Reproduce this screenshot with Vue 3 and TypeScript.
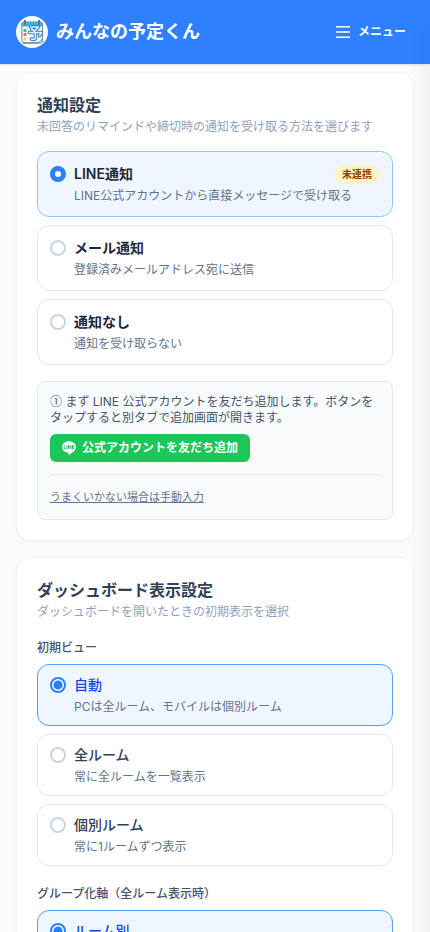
<script setup lang="ts">
import { ref } from 'vue'

interface Option {
  value: string
  title: string
  note: string
  badge?: string
}

const notifyOptions: Option[] = [
  { value: 'line', title: 'LINE通知', note: 'LINE公式アカウントから直接メッセージで受け取る', badge: '未連携' },
  { value: 'mail', title: 'メール通知', note: '登録済みメールアドレス宛に送信' },
  { value: 'none', title: '通知なし', note: '通知を受け取らない' },
]
const viewOptions: Option[] = [
  { value: 'auto', title: '自動', note: 'PCは全ルーム、モバイルは個別ルーム' },
  { value: 'all', title: '全ルーム', note: '常に全ルームを一覧表示' },
  { value: 'single', title: '個別ルーム', note: '常に1ルームずつ表示' },
]
const groupOptions: Option[] = [{ value: 'room', title: 'ルーム別', note: '' }]

const notify = ref('line')
const view = ref('auto')
const group = ref('room')
</script>

<template>
  <div class="page">
    <header class="bar">
      <a class="brand" href="#">
        <svg class="logo" viewBox="0 0 32 32" aria-hidden="true">
          <circle cx="16" cy="16" r="16" fill="#fff" />
          <rect x="5.8" y="6" width="20.8" height="21" rx="2" fill="#f1f8fd" stroke="#6d8798" />
          <path d="M6 10.500V7.500q0-1.500 1.500-1.500h17.500q1.500 0 1.500 1.500v3z" fill="#3fb0e4" />
          <path d="M9 4.800v3.400M23 4.800v3.400" stroke="#5b7689" stroke-width="2" stroke-linecap="round" />
          <rect x="7.500" y="13" width="3" height="3" fill="#46c07f" />
          <rect x="7.500" y="17" width="3" height="3" fill="#f4667a" />
          <path d="m9 21 1.700 1.700L9 24.400l-1.700-1.700z" fill="#fbcf58" />
          <g fill="none" stroke-linecap="round" stroke-linejoin="round">
            <path d="M14.500 11h8l-4 4-3-2m-2 3.500h12l-2 3m-4-3v5.500q0 2-4 1" stroke="#2f7fc2" stroke-width="3.600" />
            <path d="M14.500 11h8l-4 4-3-2m-2 3.500h12l-2 3m-4-3v5.500q0 2-4 1" stroke="#e0f3ff" stroke-width="1.600" />
          </g>
          <path d="M7 27h15.500l4-4" fill="none" stroke="#58758a" />
        </svg>
        <span class="name">みんなの予定くん</span>
      </a>
      <button class="menu" type="button">
        <svg class="menu-icon" viewBox="0 0 14 14" fill="none" stroke="currentColor" stroke-width="1.500" aria-hidden="true">
          <path d="M0 1.750h14M0 7h14M0 12.250h14" />
        </svg>
        メニュー
      </button>
    </header>

    <main class="content">
      <section class="card">
        <h2>通知設定</h2>
        <p class="lead">未回答のリマインドや締切時の通知を受け取る方法を選びます</p>
        <div class="options" role="radiogroup" aria-label="通知設定">
          <label v-for="o in notifyOptions" :key="o.value" class="option notify" :class="{ on: notify === o.value }">
            <input v-model="notify" type="radio" name="notify" :value="o.value" />
            <span class="body">
              <span class="head">
                <span class="title">{{ o.title }}</span>
                <span v-if="o.badge" class="badge">{{ o.badge }}</span>
              </span>
              <span class="note">{{ o.note }}</span>
            </span>
          </label>
        </div>
        <div class="guide">
          <p><span class="step">①</span> まず LINE 公式アカウントを友だち追加します。ボタンをタップすると別タブで追加画面が開きます。</p>
          <a class="add" href="#">
            <svg viewBox="0 0 24 24" aria-hidden="true">
              <path d="M24 10.300C24 4.900 18.600.600 12 .600S0 4.900 0 10.300c0 4.800 4.300 8.900 10 9.600.400.100.900.300 1.100.600.100.300.100.800 0 1.100l-.200 1.100c0 .300-.200 1.300 1.100.700s7.100-4.200 9.700-7.200C23.500 14.300 24 12.300 24 10.300z" fill="#fff" />
              <path d="M3.800 7v6.200h2.800M8.600 7v7M11.300 14V7.300l4 6V7M21 7.800h-3v5.400h3M18 10.500h2.700" fill="none" stroke="#1cc658" stroke-width="1.700" />
            </svg>
            公式アカウントを友だち追加
          </a>
          <div class="manual">
            <button type="button">うまくいかない場合は手動入力</button>
          </div>
        </div>
      </section>

      <section class="card">
        <h2>ダッシュボード表示設定</h2>
        <p class="lead">ダッシュボードを開いたときの初期表示を選択</p>
        <fieldset>
          <legend>初期ビュー</legend>
          <div class="options">
            <label v-for="o in viewOptions" :key="o.value" class="option view" :class="{ on: view === o.value }">
              <input v-model="view" type="radio" name="view" :value="o.value" />
              <span class="body">
                <span class="title">{{ o.title }}</span>
                <span class="note">{{ o.note }}</span>
              </span>
            </label>
          </div>
        </fieldset>
        <fieldset>
          <legend>グループ化軸（全ルーム表示時）</legend>
          <div class="options">
            <label v-for="o in groupOptions" :key="o.value" class="option view" :class="{ on: group === o.value }">
              <input v-model="group" type="radio" name="group" :value="o.value" />
              <span class="body">
                <span class="title">{{ o.title }}</span>
                <span class="note">{{ o.note }}</span>
              </span>
            </label>
          </div>
        </fieldset>
      </section>
    </main>
    <div class="drawer" aria-hidden="true"></div>
  </div>
</template>

<style>
html {
  scrollbar-width: none;
}
body {
  background: #f8fafc;
}
</style>

<style scoped>
* {
  box-sizing: border-box;
}
.page {
  min-height: 100vh;
  font-family: Inter, 'Noto Sans CJK JP', sans-serif;
  color: #314158;
}
.bar {
  position: sticky;
  top: 0;
  z-index: 1;
  display: flex;
  align-items: center;
  justify-content: space-between;
  height: 64px;
  padding: 0 16px;
  background: #2f80ff;
  color: #fff;
  box-shadow: 0 1px 2px rgb(0 0 0 / 12%);
}
.brand {
  display: flex;
  align-items: center;
  gap: 8px;
  color: inherit;
  text-decoration: none;
}
.logo {
  width: 32px;
  height: 32px;
}
.name {
  font-size: 18px;
  font-weight: 700;
  line-height: 28px;
}
button {
  border: 0;
  background: none;
  color: inherit;
  font: inherit;
  cursor: pointer;
}
.menu {
  display: flex;
  align-items: center;
  gap: 8px;
  padding: 8px;
  font-size: 12px;
  font-weight: 600;
  line-height: 16px;
}
.menu-icon {
  width: 14px;
  height: 14px;
}
.content {
  display: flex;
  flex-direction: column;
  gap: 16px;
  padding: 8px 16px 16px;
}
.card {
  padding: 20px;
  border: 1px solid #f1f5f9;
  border-radius: 16px;
  background: #fff;
  box-shadow: 0 1px 2px rgb(0 0 0 / 5%);
}
h2 {
  margin: 0;
  font-size: 16px;
  font-weight: 600;
  line-height: 24px;
}
.lead {
  margin: 2px 0 0;
  color: #90a1b9;
  font-size: 12px;
  line-height: 16px;
}
.options {
  display: flex;
  flex-direction: column;
  gap: 8px;
}
.lead + .options {
  margin-top: 16px;
}
.option {
  display: flex;
  gap: 8px;
  padding: 12px;
  border: 1px solid #e2e8f0;
  border-radius: 12px;
  cursor: pointer;
}
.option.view {
  padding: 10px 12px;
}
.option.on {
  border-color: #8ec5ff;
  background: #eff6ff;
}
.option.view.on {
  border-color: #51a2ff;
}
input {
  appearance: none;
  flex: none;
  width: 16px;
  height: 16px;
  margin: 2px 0 0;
  border: 2px solid #cad5e2;
  border-radius: 50%;
  background: #fff;
}
.notify input:checked {
  border: 5px solid #2b7fff;
}
.view input:checked {
  border-color: #2b7fff;
  background: radial-gradient(circle, #2b7fff 4px, #fff 5px);
}
.body {
  display: flex;
  flex: 1;
  flex-direction: column;
  gap: 4px;
  min-width: 0;
}
.head {
  display: flex;
  align-items: center;
  justify-content: space-between;
  height: 20px;
}
.title {
  color: #1d293d;
  font-size: 14px;
  font-weight: 600;
  line-height: 20px;
}
.view .title {
  color: #314158;
  font-weight: 500;
}
.view.on .title {
  color: #1447e6;
}
.note {
  min-height: 16px;
  color: #62748e;
  font-size: 12px;
  line-height: 16px;
}
.badge {
  padding: 2px 8px;
  border-radius: 10px;
  background: #fef3c6;
  color: #973c00;
  font-size: 10px;
  font-weight: 600;
  line-height: 15px;
}
.guide {
  display: flex;
  flex-direction: column;
  align-items: flex-start;
  margin-top: 16px;
  padding: 12px;
  border: 1px solid #e2e8f0;
  border-radius: 8px;
  background: #f8fafc;
}
.guide p {
  margin: 0 0 8px;
  color: #45556c;
  font-size: 12px;
  line-height: 16px;
}
.step {
  font-family: 'Noto Sans CJK JP', sans-serif;
  line-height: 1;
}
.add {
  display: flex;
  align-items: center;
  gap: 6px;
  padding: 6px 12px;
  border-radius: 6px;
  background: #1cc658;
  color: #fff;
  font-size: 12px;
  font-weight: 600;
  line-height: 16px;
  text-decoration: none;
}
.add svg {
  width: 14px;
  height: 14px;
}
.manual {
  align-self: stretch;
  margin-top: 12px;
  padding-top: 12px;
  border-top: 1px solid #e2e8f0;
}
.manual button {
  display: block;
  padding: 0;
  color: #62748e;
  font-size: 11px;
  line-height: 20px;
  text-decoration: underline;
}
fieldset {
  min-width: 0;
  margin: 20px 0 0;
  padding: 0;
  border: 0;
}
legend {
  padding: 0 0 8px;
  color: #45556c;
  font-size: 12px;
  font-weight: 500;
  line-height: 16px;
}
.drawer {
  position: fixed;
  z-index: 2;
  top: 0;
  bottom: 0;
  left: 100%;
  width: 288px;
  box-shadow: 0 20px 25px -5px rgb(0 0 0 / 10%), 0 8px 10px -6px rgb(0 0 0 / 10%);
}
</style>
